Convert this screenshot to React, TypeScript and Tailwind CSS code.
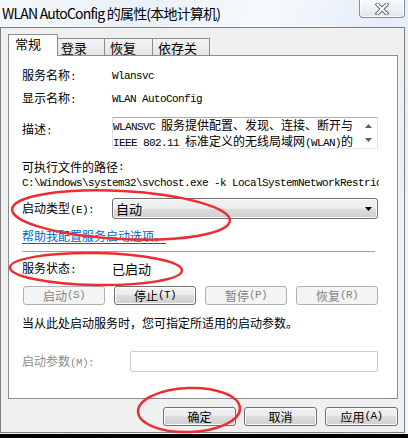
import React from 'react';

// ASCII runs get the narrow mono face (like SimSun half-width), CJK runs keep 12px
function Mix({ text }: { text: string }) {
  return (
    <>
      {text
        .split(/([\x20-\x7e]+)/)
        .filter(Boolean)
        .map((p, i) =>
          /^[\x20-\x7e]+$/.test(p) ? (
            <span key={i} className="font-['Liberation_Mono',monospace] text-[11px] tracking-[-0.6px] whitespace-pre">
              {p}
            </span>
          ) : (
            <span key={i}>{p}</span>
          )
        )}
    </>
  );
}

function Btn({ label, disabled = false, className = '' }: { label: string; disabled?: boolean; className?: string }) {
  const look = disabled
    ? 'border-[#adb2b5] bg-[#f4f4f4] text-[#838383]'
    : 'border-[#707070] text-black bg-[linear-gradient(to_bottom,#f2f2f2_0%,#ebebeb_50%,#dddddd_50%,#cfcfcf_100%)] shadow-[inset_0_0_0_1px_#fbfbfb]';
  return (
    <div className={`h-[19px] border rounded-[3px] flex items-center justify-center leading-none ${look} ${className}`}>
      <Mix text={label} />
    </div>
  );
}

function Row({ label, value, className = '' }: { label: string; value?: string; className?: string }) {
  return (
    <div className={`h-[16px] flex items-center ${className}`}>
      <div className="w-[90px] shrink-0">
        <Mix text={label} />
      </div>
      {value && (
        <div className="font-['Liberation_Mono',monospace] text-[11px] tracking-[-0.6px] whitespace-pre">{value}</div>
      )}
    </div>
  );
}

export default function App() {
  return (
    <div className="w-[408px] h-[438px] bg-black overflow-hidden relative text-[12px] text-black font-['Noto_Sans_CJK_SC',sans-serif]">
      <div className="h-[434px] bg-[linear-gradient(100deg,#f5f8fc_0%,#e9f0f8_30%,#f7fafd_55%,#e4edf7_80%,#f2f6fb_100%)]">
        <div className="w-[405px] h-[433px] flex flex-col">
          {/* title bar */}
          <div className="h-[27px] flex justify-between shrink-0">
            <div className="pl-[2px] pt-[3px] text-[14px] leading-[20px] tracking-[-0.8px] text-black whitespace-nowrap">
              WLAN AutoConfig 的属性(本地计算机)
            </div>
            <div className="w-[46px] h-[18px] border border-t-0 border-[#8a8f96] rounded-b-[4px] bg-[linear-gradient(to_bottom,#f7f9fb,#e3e8ee)] shadow-[inset_0_0_0_1px_rgba(255,255,255,0.7)] flex items-center justify-center">
              <svg width="14" height="12" viewBox="0 0 14 12">
                <path d="M2.5 1.5 L11.5 10.5 M11.5 1.5 L2.5 10.5" stroke="#5d6570" strokeWidth="4" strokeLinecap="square" />
                <path d="M2.5 1.5 L11.5 10.5 M11.5 1.5 L2.5 10.5" stroke="#ffffff" strokeWidth="2" strokeLinecap="square" />
              </svg>
            </div>
          </div>

          {/* window body */}
          <div className="flex-1 bg-[#f0f0f0] border border-[#7f7f7f] flex flex-col">
            {/* tabs */}
            <div className="mt-[6px] ml-[7px] flex items-end h-[21px]">
              <div className="w-[50px] h-[22px] bg-white border border-b-0 border-[#898c95] pl-[6px] pt-[1px] leading-[16px] text-[13px] relative z-10 -mb-px">
                常规
              </div>
              {[
                ['登录', 'w-[47px] pl-[3px]'],
                ['恢复', 'w-[48px] pl-[5px]'],
                ['依存关系', 'w-[57px] pl-[5px]'],
              ].map(([t, c]) => (
                <div
                  key={t}
                  className={`${c} h-[17px] border-t border-r border-[#898c95] bg-[linear-gradient(to_bottom,#f3f3f3,#e4e4e4)] leading-[17px] text-[13px]`}
                >
                  {t}
                </div>
              ))}
            </div>

            {/* panel */}
            <div className="ml-[7px] w-[390px] h-[344px] bg-white border border-[#898c95] pl-[13px] flex flex-col">
              <Row className="mt-[12px]" label="服务名称:" value="Wlansvc" />
              <Row className="mt-[7px]" label="显示名称:" value="WLAN AutoConfig" />

              <div className="mt-[10px] flex">
                <div className="w-[90px] shrink-0 pt-[4px] leading-[16px]">
                  <Mix text="描述:" />
                </div>
                <div className="w-[266px] h-[32px] border border-t-[#abadb3] border-x-[#dbdfe6] border-b-[#e3e9ef] flex">
                  <div className="flex-1 leading-[13px] overflow-hidden whitespace-nowrap">
                    <div>
                      <Mix text="WLANSVC 服务提供配置、发现、连接、断开与" />
                    </div>
                    <div>
                      <Mix text="IEEE 802.11 标准定义的无线局域网(WLAN)的" />
                    </div>
                  </div>
                  <div className="w-[17px] flex flex-col items-center justify-between py-[6px]">
                    <svg width="7" height="4" viewBox="0 0 7 4">
                      <path d="M0 4 L3.5 0 L7 4 Z" fill="#5f5f5f" />
                    </svg>
                    <svg width="7" height="4" viewBox="0 0 7 4">
                      <path d="M0 0 L7 0 L3.5 4 Z" fill="#5f5f5f" />
                    </svg>
                  </div>
                </div>
              </div>

              <div className="mt-[10px] h-[16px] flex items-center whitespace-nowrap">
                <Mix text="可执行文件的路径:" />
              </div>
              <div className="h-[16px] w-[357px] overflow-hidden whitespace-nowrap flex items-center">
                <span className="font-['Liberation_Mono',monospace] text-[11px] tracking-[-0.6px] whitespace-pre">
                  C:\Windows\system32\svchost.exe -k LocalSystemNetworkRestricted
                </span>
              </div>

              <div className="mt-[7px] h-[21px] flex items-center">
                <div className="w-[90px] shrink-0">
                  <Mix text="启动类型(E):" />
                </div>
                <div className="w-[266px] h-[21px] border border-[#707070] rounded-[3px] bg-[linear-gradient(to_bottom,#f2f2f2_0%,#ebebeb_50%,#dddddd_50%,#cfcfcf_100%)] shadow-[inset_0_0_0_1px_#fbfbfb] flex items-center justify-between pl-[3px] pr-[5px] text-[13px]">
                  <span>自动</span>
                  <svg width="7" height="4" viewBox="0 0 7 4">
                    <path d="M0 0 L7 0 L3.5 4 Z" fill="#000" />
                  </svg>
                </div>
              </div>

              <div className="mt-[9px] h-[16px] flex items-center">
                <span className="text-[#0066cc] underline underline-offset-[2px]">帮助我配置服务启动选项。</span>
              </div>

              <div className="mt-[7px] h-px w-[353px] bg-[#a0a0a0]" />

              <div className="mt-[9px] h-[16px] flex items-center">
                <div className="w-[90px] shrink-0">
                  <Mix text="服务状态:" />
                </div>
                <span className="text-[13px]">已启动</span>
              </div>

              <div className="mt-[9px] w-[356px] flex justify-between pl-[1px]">
                <Btn className="w-[82px]" label="启动(S)" disabled />
                <Btn className="w-[82px]" label="停止(T)" />
                <Btn className="w-[82px]" label="暂停(P)" disabled />
                <Btn className="w-[82px]" label="恢复(R)" disabled />
              </div>

              <div className="mt-[10px] h-[16px] flex items-center">当从此处启动服务时，您可指定所适用的启动参数。</div>

              <div className="mt-[20px] h-[21px] flex items-center">
                <div className="w-[108px] shrink-0 text-[#8d8d8d]">
                  <Mix text="启动参数(M):" />
                </div>
                <div className="w-[248px] h-[21px] border border-[#c9cdd2] rounded-[2px] bg-white" />
              </div>
            </div>

            {/* dialog buttons */}
            <div className="mt-[8px] pr-[6px] flex justify-end gap-[8px]">
              <Btn className="w-[73px]" label="确定" />
              <Btn className="w-[73px]" label="取消" />
              <Btn className="w-[73px]" label="应用(A)" />
            </div>
          </div>
        </div>
      </div>

      {/* red marker ellipses drawn over the screenshot */}
      <svg className="absolute inset-0 pointer-events-none" width="408" height="438" viewBox="0 0 408 438">
        <ellipse cx="121" cy="215" rx="109" ry="24" transform="rotate(3 121 215)" fill="none" stroke="#ec2d33" strokeWidth="2.5" />
        <ellipse cx="96" cy="269" rx="86" ry="16" transform="rotate(1 96 269)" fill="none" stroke="#ec2d33" strokeWidth="2.5" />
        <ellipse cx="189" cy="410" rx="51" ry="22" transform="rotate(-2 189 410)" fill="none" stroke="#ec2d33" strokeWidth="2.5" />
      </svg>
    </div>
  );
}
